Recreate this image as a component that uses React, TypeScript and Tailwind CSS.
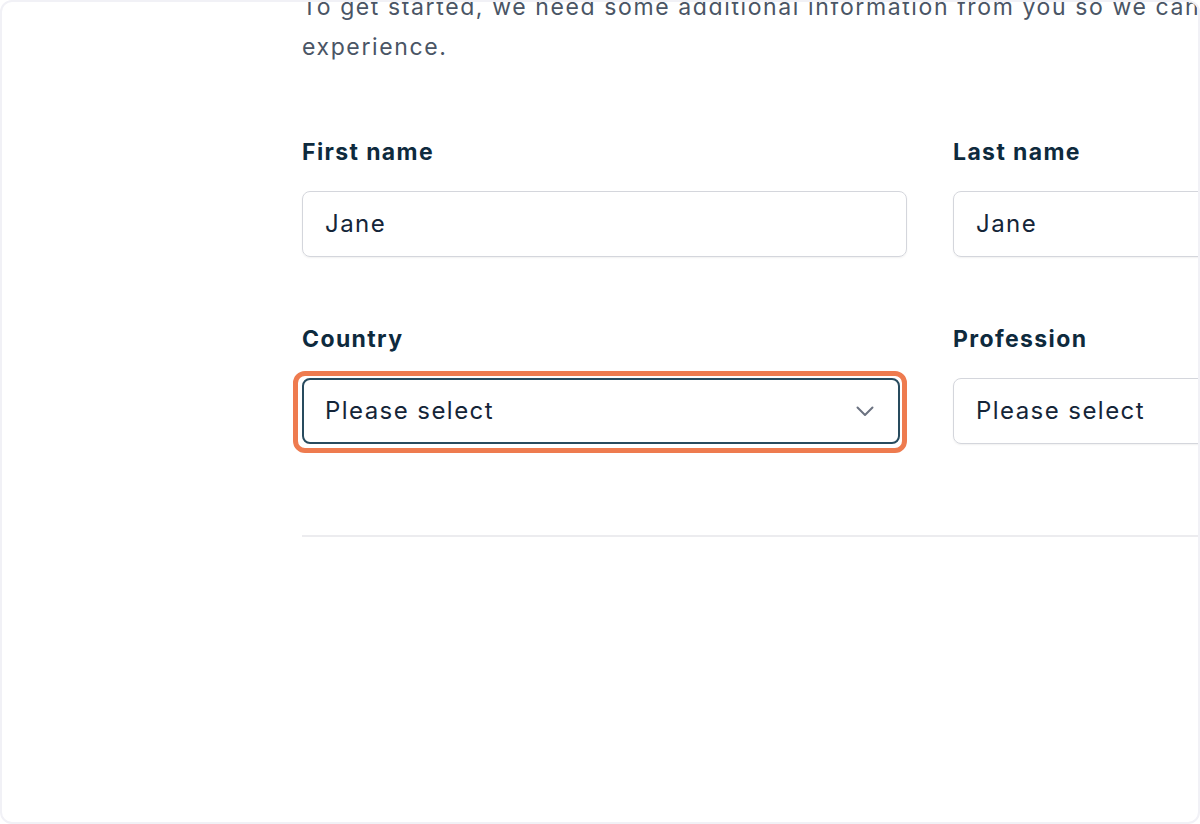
import React from "react";

const font = { fontFamily: "Inter, 'Noto Sans', sans-serif" };

function Chevron() {
  return (
    <svg width="24" height="24" viewBox="0 0 24 24" fill="none" className="text-[#6b7280]">
      <path d="M4.5 8.5 L12 16 L19.5 8.5" stroke="currentColor" strokeWidth="2" strokeLinecap="round" strokeLinejoin="round" />
    </svg>
  );
}

const inputCls =
  "mt-[24px] h-[66px] rounded-[8px] border border-[#d4d6dc] shadow-[0_1px_2px_rgba(0,0,0,0.06)] flex items-center pl-[22px] text-[24px] tracking-[0.06em] text-[#142538]";
const labelCls = "text-[23px] leading-[30px] font-bold tracking-[0.06em] text-[#0e2a3d]";

export default function App() {
  return (
    <div className="w-[1200px] h-[824px] bg-white overflow-hidden" style={font}>
      <div className="w-full h-full border-2 border-[#f1f1f6] rounded-[12px] overflow-hidden pl-[300px]">
        <p className="mt-[-15px] text-[23px] leading-[40px] tracking-[0.07em] text-[#4a5565] whitespace-nowrap">
          To get started, we need some additional information from you so we can tailor your
          <br />
          experience.
        </p>
        <div className="mt-[70px] grid grid-cols-[605px_605px] gap-x-[46px] w-[1256px]">
          <div className="flex flex-col">
            <label className={labelCls}>First name</label>
            <div className={inputCls}>Jane</div>
          </div>
          <div className="flex flex-col">
            <label className={labelCls}>Last name</label>
            <div className={inputCls}>Jane</div>
          </div>
          <div className="flex flex-col mt-[67px]">
            <label className={labelCls}>Country</label>
            <div className="relative mt-[24px] w-[598px]">
              <div className="absolute -left-[9px] -top-[7px] -right-[7px] -bottom-[9px] rounded-[12px] border-[5px] border-[#ee7b4f]" />
              <div className="relative h-[66px] rounded-[8px] border-2 border-[#284b5e] flex items-center justify-between pl-[21px] pr-[21px] text-[24px] tracking-[0.06em] text-[#142538]">
                <span>Please select</span>
                <Chevron />
              </div>
            </div>
          </div>
          <div className="flex flex-col mt-[67px]">
            <label className={labelCls}>Profession</label>
            <div className={inputCls + " justify-between pr-[21px]"}>
              <span>Please select</span>
              <Chevron />
            </div>
          </div>
        </div>
        <div className="mt-[91px] h-[2px] bg-[#ececef] w-[1000px]" />
      </div>
    </div>
  );
}
